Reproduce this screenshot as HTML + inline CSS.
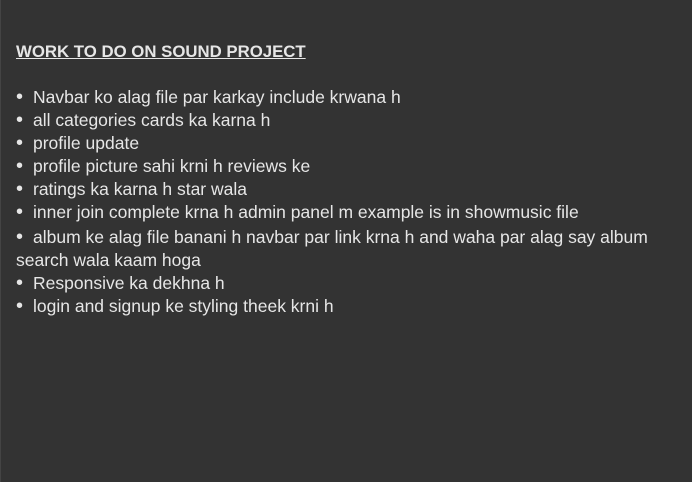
<!DOCTYPE html>
<html><head><meta charset="utf-8"><style>
html,body{margin:0;padding:0;background:#333333;width:692px;height:482px;overflow:hidden}
body{border-left:1px solid #444;box-sizing:border-box;font-family:"Liberation Sans",sans-serif;color:#e6e6e6}
.h{position:absolute;left:16px;top:42px;font-size:16.8px;font-weight:bold;text-decoration:underline;white-space:nowrap}
.l{position:absolute;left:16px;font-size:17.5px;white-space:nowrap;line-height:23px}
.b{display:inline-block;width:17px;font-size:20px;line-height:20px;vertical-align:top;margin-top:1px}
</style></head><body>
<div class="h">WORK TO DO ON SOUND PROJECT</div>
<div class="l" style="top:86px"><span class="b">•</span>Navbar ko alag file par karkay include krwana h</div>
<div class="l" style="top:109px"><span class="b">•</span>all categories cards ka karna h</div>
<div class="l" style="top:132px"><span class="b">•</span>profile update</div>
<div class="l" style="top:155px"><span class="b">•</span>profile picture sahi krni h reviews ke</div>
<div class="l" style="top:178px"><span class="b">•</span>ratings ka karna h star wala</div>
<div class="l" style="top:201px"><span class="b">•</span>inner join complete krna h admin panel m example is in showmusic file</div>
<div class="l" style="top:226px"><span class="b">•</span>album ke alag file banani h navbar par link krna h and waha par alag say album</div>
<div class="l" style="top:249px">search wala kaam hoga</div>
<div class="l" style="top:272px"><span class="b">•</span>Responsive ka dekhna h</div>
<div class="l" style="top:295px"><span class="b">•</span>login and signup ke styling theek krni h</div>
</body></html>
